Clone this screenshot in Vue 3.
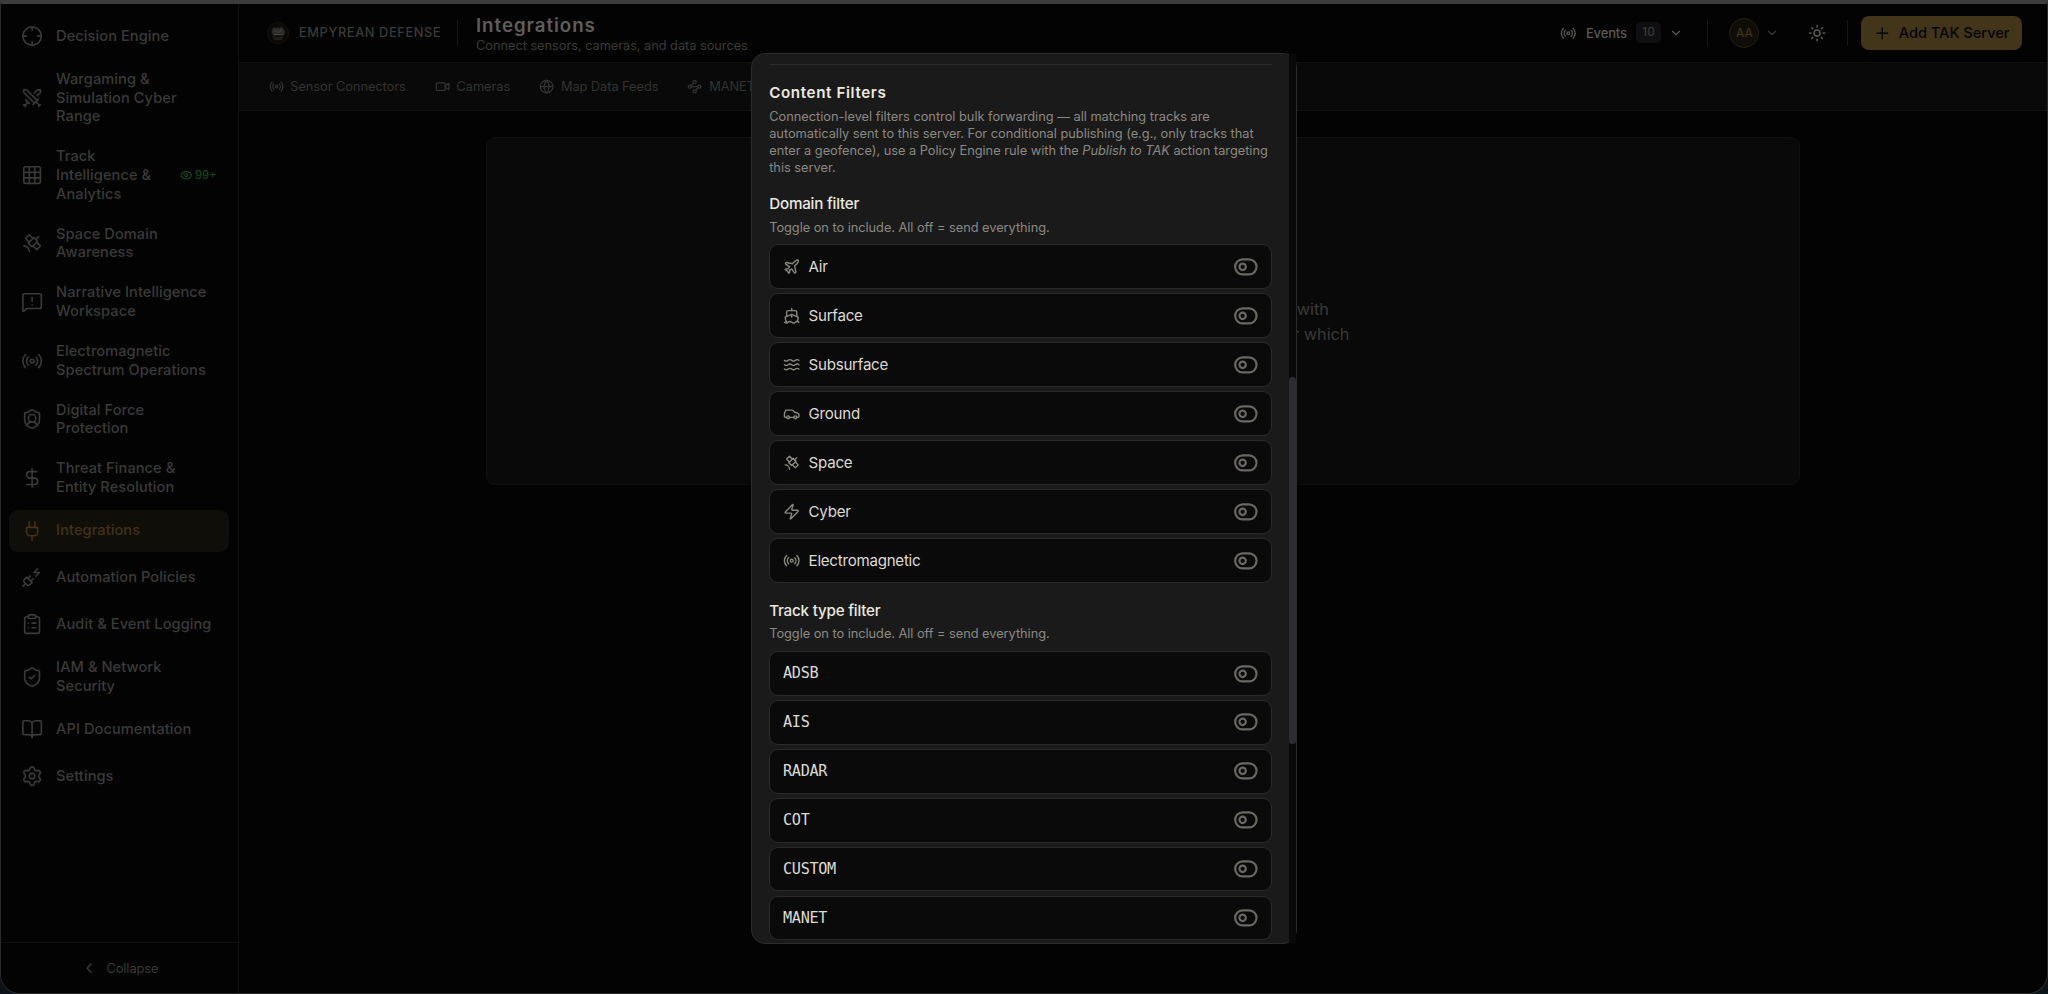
<script setup>
import { h } from 'vue'

const c = (x, y, r) => `M${x - r} ${y}a${r} ${r} 0 1 0 ${r * 2} 0a${r} ${r} 0 1 0 ${-r * 2} 0`
const shield = 'M20 13c0 5-3.5 7.5-7.66 8.95a1 1 0 0 1-.67-.01C7.5 20.5 4 18 4 13V6a1 1 0 0 1 1-1c2 0 4.5-1.2 6.24-2.72a1.17 1.17 0 0 1 1.52 0C14.51 3.81 17 5 19 5a1 1 0 0 1 1 1z'
const wave = (y) => `M2 ${y}c.6.5 1.2 1 2.5 1c2.5 0 2.5-2 5-2c2.6 0 2.4 2 5 2c2.5 0 2.5-2 5-2c1.3 0 1.9.5 2.5 1`

const icons = {
  crosshair: [c(12, 12, 10), 'M22 12h-4M6 12H2M12 6V2M12 22v-4'],
  swords: ['M14.5 17.5 3 6V3h3l11.5 11.5', 'M13 19l6-6M16 16l4 4M19 21l2-2', 'M14.5 6.5 18 3h3v3l-3.5 3.5', 'M5 14l4 4M7 17l-3 3M3 19l2 2'],
  grid: ['M5 3h14a2 2 0 0 1 2 2v14a2 2 0 0 1-2 2H5a2 2 0 0 1-2-2V5a2 2 0 0 1 2-2z', 'M3 9h18M3 15h18M9 3v18M15 3v18'],
  satellite: ['M13 7 9 3 5 7l4 4', 'm17 11 4 4-4 4-4-4', 'm8 12 4 4 6-6-4-4Z', 'm16 8 3-3', 'M9 21a6 6 0 0 0-6-6'],
  message: ['M22 17a2 2 0 0 1-2 2H6.828a2 2 0 0 0-1.414.586l-2.202 2.202A.71.71 0 0 1 2 21.286V5a2 2 0 0 1 2-2h16a2 2 0 0 1 2 2z', 'M12 15h.01', 'M12 7v4'],
  radio: ['M4.9 19.1C1 15.2 1 8.8 4.9 4.9', 'M7.8 16.2c-2.3-2.3-2.3-6.1 0-8.5', c(12, 12, 2), 'M16.2 7.8c2.3 2.3 2.3 6.1 0 8.5', 'M19.1 4.9C23 8.8 23 15.1 19.1 19'],
  shieldUser: [shield, 'M6.376 18.91a6 6 0 0 1 11.249.003', c(12, 11, 4)],
  shieldCheck: [shield, 'm9 12 2 2 4-4'],
  dollar: ['M12 2v20', 'M17 5H9.5a3.5 3.5 0 0 0 0 7h5a3.5 3.5 0 0 1 0 7H6'],
  plug: ['M12 22v-5', 'M9 8V2', 'M15 8V2', 'M18 8v5a4 4 0 0 1-4 4h-4a4 4 0 0 1-4-4V8Z'],
  plugZap: ['M6.3 20.3a2.4 2.4 0 0 0 3.4 0L12 18l-6-6-2.3 2.3a2.4 2.4 0 0 0 0 3.4Z', 'm2 22 3-3', 'M7.5 13.5 10 11', 'M10.5 16.5 13 14', 'm18 3-4 4h6l-4 4'],
  clipboard: ['M9 2h6a1 1 0 0 1 1 1v2a1 1 0 0 1-1 1H9a1 1 0 0 1-1-1V3a1 1 0 0 1 1-1z', 'M16 4h2a2 2 0 0 1 2 2v14a2 2 0 0 1-2 2H6a2 2 0 0 1-2-2V6a2 2 0 0 1 2-2h2', 'M12 11h4M12 16h4M8 11h.01M8 16h.01'],
  book: ['M12 7v14', 'M3 18a1 1 0 0 1-1-1V4a1 1 0 0 1 1-1h5a4 4 0 0 1 4 4 4 4 0 0 1 4-4h5a1 1 0 0 1 1 1v13a1 1 0 0 1-1 1h-6a3 3 0 0 0-3 3 3 3 0 0 0-3-3z'],
  settings: ['M9.671 4.136a2.34 2.34 0 0 1 4.659 0 2.34 2.34 0 0 0 3.319 1.915 2.34 2.34 0 0 1 2.33 4.033 2.34 2.34 0 0 0 0 3.831 2.34 2.34 0 0 1-2.33 4.033 2.34 2.34 0 0 0-3.319 1.915 2.34 2.34 0 0 1-4.659 0 2.34 2.34 0 0 0-3.32-1.915 2.34 2.34 0 0 1-2.33-4.033 2.34 2.34 0 0 0 0-3.831A2.34 2.34 0 0 1 6.35 6.051a2.34 2.34 0 0 0 3.319-1.915', c(12, 12, 3)],
  eye: ['M2.062 12.348a1 1 0 0 1 0-.696 10.75 10.75 0 0 1 19.876 0 1 1 0 0 1 0 .696 10.75 10.75 0 0 1-19.876 0', c(12, 12, 3)],
  left: ['m15 18-6-6 6-6'],
  down: ['m6 9 6 6 6-6'],
  plus: ['M5 12h14M12 5v14'],
  video: ['m16 13 5.223 3.482a.5.5 0 0 0 .777-.416V7.87a.5.5 0 0 0-.752-.432L16 10.5', 'M4 6h10a2 2 0 0 1 2 2v8a2 2 0 0 1-2 2H4a2 2 0 0 1-2-2V8a2 2 0 0 1 2-2z'],
  globe: [c(12, 12, 10), 'M12 2a14.5 14.5 0 0 0 0 20 14.5 14.5 0 0 0 0-20', 'M2 12h20'],
  waypoints: [c(12, 4.5, 2.5), 'm10.2 6.3-3.9 3.9', c(4.5, 12, 2.5), 'M7 12h10', c(19.5, 12, 2.5), 'm13.8 17.7 3.9-3.9', c(12, 19.5, 2.5)],
  sun: [c(12, 12, 4), 'M12 2v2M12 20v2M4.93 4.93l1.41 1.41M17.66 17.66l1.41 1.41M2 12h2M20 12h2M6.34 17.66l-1.41 1.41M19.07 4.93l-1.41 1.41'],
  plane: ['M17.8 19.2 16 11l3.5-3.5C21 6 21.5 4 21 3c-1-.5-3 0-4.5 1.5L13 8 4.8 6.2c-.5-.1-.9.1-1.1.5l-.3.5c-.2.5-.1 1 .3 1.3L9 12l-2 3H4l-1 1 3 2 2 3 1-1v-3l3-2 3.5 5.3c.3.4.8.5 1.3.3l.5-.2c.4-.3.6-.7.5-1.2z'],
  ship: ['M12 10.189V14', 'M12 2v3', 'M19 13V7a2 2 0 0 0-2-2H7a2 2 0 0 0-2 2v6', 'M19.38 20A11.6 11.6 0 0 0 21 14l-8.188-3.639a2 2 0 0 0-1.624 0L3 14a11.6 11.6 0 0 0 2.81 7.76', 'M2 21c.6.5 1.2 1 2.5 1 2.5 0 2.5-2 5-2 1.3 0 1.9.5 2.5 1s1.2 1 2.5 1c2.5 0 2.5-2 5-2 1.3 0 1.9.5 2.5 1'],
  waves: [wave(6), wave(12), wave(18)],
  car: ['M19 17h2c.6 0 1-.4 1-1v-3c0-.9-.7-1.7-1.5-1.9C18.7 10.6 16 10 16 10s-1.3-1.4-2.2-2.3c-.5-.4-1.1-.7-1.8-.7H5c-.6 0-1.1.4-1.4.9l-1.4 2.9A3.7 3.7 0 0 0 2 12v4c0 .6.4 1 1 1h2', c(7, 17, 2), 'M9 17h6', c(17, 17, 2)],
  zap: ['M4 14a1 1 0 0 1-.78-1.63l9.9-10.2a.5.5 0 0 1 .86.46l-1.92 6.02A1 1 0 0 0 13 10h7a1 1 0 0 1 .78 1.63l-9.9 10.2a.5.5 0 0 1-.86-.46l1.92-6.02A1 1 0 0 0 11 14z'],
  toggle: ['M9 5h6a7 7 0 0 1 0 14H9A7 7 0 0 1 9 5z', c(9, 12, 3)],
}

const Icon = (props) =>
  h('svg', { viewBox: '0 0 24 24', class: 'icon', width: props.size, height: props.size, 'stroke-width': props.stroke || 2 },
    icons[props.name].map((d) => h('path', { d })))
Icon.props = ['name', 'size', 'stroke']

const nav = [
  { icon: 'crosshair', lines: ['Decision Engine'] },
  { icon: 'swords', lines: ['Wargaming &', 'Simulation Cyber', 'Range'] },
  { icon: 'grid', lines: ['Track', 'Intelligence &', 'Analytics'], badge: '99+' },
  { icon: 'satellite', lines: ['Space Domain', 'Awareness'] },
  { icon: 'message', lines: ['Narrative Intelligence', 'Workspace'] },
  { icon: 'radio', lines: ['Electromagnetic', 'Spectrum Operations'] },
  { icon: 'shieldUser', lines: ['Digital Force', 'Protection'] },
  { icon: 'dollar', lines: ['Threat Finance &', 'Entity Resolution'] },
  { icon: 'plug', lines: ['Integrations'], active: true },
  { icon: 'plugZap', lines: ['Automation Policies'] },
  { icon: 'clipboard', lines: ['Audit & Event Logging'] },
  { icon: 'shieldCheck', lines: ['IAM & Network', 'Security'] },
  { icon: 'book', lines: ['API Documentation'] },
  { icon: 'settings', lines: ['Settings'] },
]
const tabs = [
  { icon: 'radio', label: 'Sensor Connectors' },
  { icon: 'video', label: 'Cameras' },
  { icon: 'globe', label: 'Map Data Feeds' },
  { icon: 'waypoints', label: 'MANET' },
]
const domains = [
  ['plane', 'Air'], ['ship', 'Surface'], ['waves', 'Subsurface'], ['car', 'Ground'],
  ['satellite', 'Space'], ['zap', 'Cyber'], ['radio', 'Electromagnetic'],
]
const types = ['ADSB', 'AIS', 'RADAR', 'COT', 'CUSTOM', 'MANET']
</script>

<template>
  <div class="screen">
    <div class="window">
      <aside class="sidebar">
        <nav class="nav">
          <div v-for="n in nav" :key="n.icon" class="nav-item" :class="{ active: n.active }">
            <Icon :name="n.icon" size="22.2" stroke="1.75" />
            <div class="nav-label"><div v-for="l in n.lines" :key="l">{{ l }}</div></div>
            <div v-if="n.badge" class="watch"><Icon name="eye" size="12.5" />{{ n.badge }}</div>
          </div>
        </nav>
        <div class="collapse"><Icon name="left" size="16.3" /><span>Collapse</span></div>
      </aside>

      <main class="main">
        <header class="header">
          <svg class="logo" viewBox="0 0 22 22">
            <circle cx="11" cy="11" r="10.5" fill="#0b0a06" stroke="#15120a" />
            <path d="M5 11.500c-.8-2.500.2-5 2.200-6.500l1.500 1.500L11 5l1.500 1.500L15 4.500l1.500 3c1.500 1 1.500 2.500 1 4.500l-1.500 1.500H7z" fill="#2b2b28" />
            <path d="M5 14c3 1.200 9 1.200 12 0l-2.500 4h-7z" fill="#211d12" />
            <path d="M7.500 7.500l1.500 3M14.500 7l-2 3.500M11 8v3M6 12.500h10" stroke="#45443f" stroke-width=".9" fill="none" />
          </svg>
          <span class="org">EMPYREAN DEFENSE</span>
          <i class="divider d1"></i>
          <div class="heading">
            <h1>Integrations</h1>
            <p>Connect sensors, cameras, and data sources</p>
          </div>
          <div class="events">
            <Icon name="radio" size="16.5" />
            <span class="events-label">Events</span>
            <span class="count">10</span>
            <Icon name="down" size="14" />
          </div>
          <i class="divider d2"></i>
          <div class="user"><span class="avatar">AA</span><Icon name="down" size="14" /></div>
          <Icon name="sun" size="18.2" class="theme" />
          <i class="divider d3"></i>
          <div class="add"><Icon name="plus" size="18.5" stroke="1.75" /><span>Add TAK Server</span></div>
        </header>

        <div class="tabs">
          <div v-for="t in tabs" :key="t.label" class="tab"><Icon :name="t.icon" size="15.2" /><span>{{ t.label }}</span></div>
        </div>

        <section class="content">
          <div class="empty">
            <p class="l1">with</p>
            <p>for which</p>
          </div>
        </section>
      </main>
    </div>

    <div class="modal">
      <div class="body">
        <hr />
        <h2>Content Filters</h2>
        <p class="desc">
          Connection-level filters control bulk forwarding — all matching tracks are<br />
          automatically sent to this server. For conditional publishing (e.g., only tracks that<br />
          enter a geofence), use a Policy Engine rule with the <em>Publish to TAK</em> action targeting<br />
          this server.
        </p>
        <h3>Domain filter</h3>
        <p class="hint">Toggle on to include. All off = send everything.</p>
        <div class="rows">
          <div v-for="d in domains" :key="d[1]" class="row">
            <Icon :name="d[0]" size="17.4" stroke="1.9" class="row-icon" />
            <span class="row-label">{{ d[1] }}</span>
            <Icon name="toggle" size="25.7" class="toggle" />
          </div>
        </div>
        <h3 class="second">Track type filter</h3>
        <p class="hint">Toggle on to include. All off = send everything.</p>
        <div class="rows">
          <div v-for="t in types" :key="t" class="row">
            <span class="row-label mono">{{ t }}</span>
            <Icon name="toggle" size="25.7" class="toggle" />
          </div>
        </div>
      </div>
      <div class="track"><div class="thumb"></div></div>
    </div>
  </div>
</template>

<style>
body { margin: 0; background: #0b1418; overflow: hidden; }
</style>

<style scoped>
* { box-sizing: border-box; }
h1, h2, h3, p { margin: 0; }
.screen {
  position: relative;
  width: 2048px;
  height: 994px;
  background: #0b1418;
  font-family: Inter, "Liberation Sans", sans-serif;
}
.icon { flex: none; display: block; fill: none; stroke: currentColor; stroke-linecap: round; stroke-linejoin: round; }
.window {
  display: flex;
  height: 994px;
  border: 1px solid #2b2b2b;
  border-left-width: 1.5px;
  border-top: 4px solid #3c3c3c;
  border-radius: 0 0 20px 20px;
  background: #030303;
  overflow: hidden;
}
.sidebar { width: 238px; flex: none; display: flex; flex-direction: column; border-right: 1px solid #101010; background: #030303; }
.nav { flex: 1; display: flex; flex-direction: column; gap: 4.63px; padding: 11px 9px 0 8px; }
.nav-item {
  display: flex; align-items: center; gap: 12.5px;
  min-height: 42.1px; padding: 8.32px 12.4px; border-radius: 9px;
  color: #3a3a38; font-size: 14.6px; line-height: 18.7px; font-weight: 500; letter-spacing: 0.005em;
}
.nav-item.active { background: #100e08; color: #403215; }
.nav-label { flex: 1; white-space: nowrap; }
.watch { display: flex; align-items: center; gap: 2.5px; color: #194b1f; font-size: 11.3px; line-height: 14px; font-weight: 400; letter-spacing: 0; }
.collapse {
  height: 51px; flex: none; display: flex; align-items: center; justify-content: center; gap: 9.5px;
  border-top: 1px solid #121212; color: #3a3a38; font-size: 12.8px; letter-spacing: -0.004em;
}
.main { flex: 1; min-width: 0; display: flex; flex-direction: column; }
.header { height: 58.5px; flex: none; display: flex; align-items: center; padding: 0 25.5px 0 27.5px; border-bottom: 1px solid #101010; }
.logo { width: 22px; height: 22px; flex: none; }
.org { margin-left: 10.5px; width: 142.8px; white-space: nowrap; font-size: 12.8px; font-weight: 500; letter-spacing: 0.047em; color: #3a3a38; }
.divider { width: 1px; height: 26px; background: #161616; flex: none; }
.d1 { margin-left: 15.5px; }
.heading { margin-left: 17.7px; padding-top: 4px; flex: 1; white-space: nowrap; }
.heading h1 { font-size: 18.67px; line-height: 22px; font-weight: 600; letter-spacing: 0.052em; color: #5f5e5a; }
.heading p { font-size: 12.8px; line-height: 17.5px; color: #3a3a38; letter-spacing: -0.003em; }
.events { display: flex; align-items: center; color: #5a5955; font-size: 13px; font-weight: 500; }
.events-label { margin: 0 9.5px 0 9px; letter-spacing: -0.012em; }
.count { width: 24.5px; height: 21px; border-radius: 4.5px; background: #0f0f11; color: #3a3a38; font-size: 11.7px; line-height: 21px; text-align: center; margin-right: 8px; }
.d2 { margin-left: 24px; }
.user { display: flex; align-items: center; gap: 6px; margin-left: 21.5px; color: #3a3a38; }
.avatar { width: 30px; height: 30px; border-radius: 50%; border: 1px solid #261f0f; background: #0f0d07; color: #403215; font-size: 11.7px; line-height: 28px; font-weight: 500; text-align: center; }
.theme { margin-left: 28.5px; color: #5a5955; }
.d3 { margin-left: 20.5px; }
.add { display: flex; align-items: center; gap: 7.7px; height: 34.5px; width: 161px; margin-left: 13px; padding-left: 12px; border-radius: 8px; background: #43351a; color: #060503; font-size: 14.7px; font-weight: 500; letter-spacing: -0.004em; white-space: nowrap; }
.tabs { height: 48.3px; flex: none; display: flex; align-items: center; gap: 29px; padding: 1.4px 0 0 29.5px; background: #090909; border-bottom: 1px solid #101010; }
.tab { display: flex; align-items: center; gap: 6.6px; color: #333331; font-size: 12.8px; letter-spacing: -0.004em; }
.content { flex: 1; display: flex; justify-content: center; align-items: flex-start; padding-top: 26px; }
.empty { width: 1314px; height: 348px; border: 1px solid #101010; border-radius: 9px; background: #090909; color: #3a3a38; font-size: 16.3px; line-height: 25.5px; text-align: right; padding: 159px 449.5px 0 0; }
.l1 { padding-right: 20.5px; }

.modal { position: absolute; left: 751px; top: 53px; width: 546px; height: 891px; border: 1px solid #2b2b2b; border-radius: 14px; background: #1a1a1a; }
.body { height: 889px; overflow: hidden; border-radius: 13px; padding: 10px 24px 0 17.2px; }
hr { margin: 0; border: 0; height: 1px; background: #2b2b2b; }
h2 { margin-top: 18px; font-size: 15.2px; line-height: 20px; font-weight: 600; letter-spacing: 0.04em; color: #ece9e0; }
.desc { margin-top: 4.5px; font-size: 12.8px; line-height: 17.05px; color: #8b8983; letter-spacing: -0.001em; white-space: nowrap; }
h3 { margin-top: 18.5px; font-size: 15.2px; line-height: 20px; font-weight: 500; color: #ece9e0; letter-spacing: -0.014em; }
h3.second { margin-top: 18.3px; }
.hint { margin-top: 4.5px; font-size: 12.8px; line-height: 18px; color: #8b8983; letter-spacing: -0.003em; }
.rows { display: flex; flex-direction: column; gap: 4.6px; margin-top: 7.7px; }
.row { height: 44.4px; flex: none; display: flex; align-items: center; padding: 0 12px 0 12.8px; border: 1px solid #2a2a2a; border-radius: 9px; background: #0a0a0a; }
.row-icon { margin-right: 8.2px; color: #8b8983; }
.row-label { flex: 1; color: #dedbd2; font-size: 15.1px; letter-spacing: -0.016em; }
.mono { font-family: "DejaVu Sans Mono", monospace; font-size: 15.2px; letter-spacing: -0.32px; }
.toggle { color: #6a6862; }
.track { position: absolute; right: 0; top: 0; width: 7px; height: 889px; background: #0a0a0a; padding-top: 323px; }
.thumb { height: 367px; border-radius: 3.5px; background: #2c2d31; }
</style>
